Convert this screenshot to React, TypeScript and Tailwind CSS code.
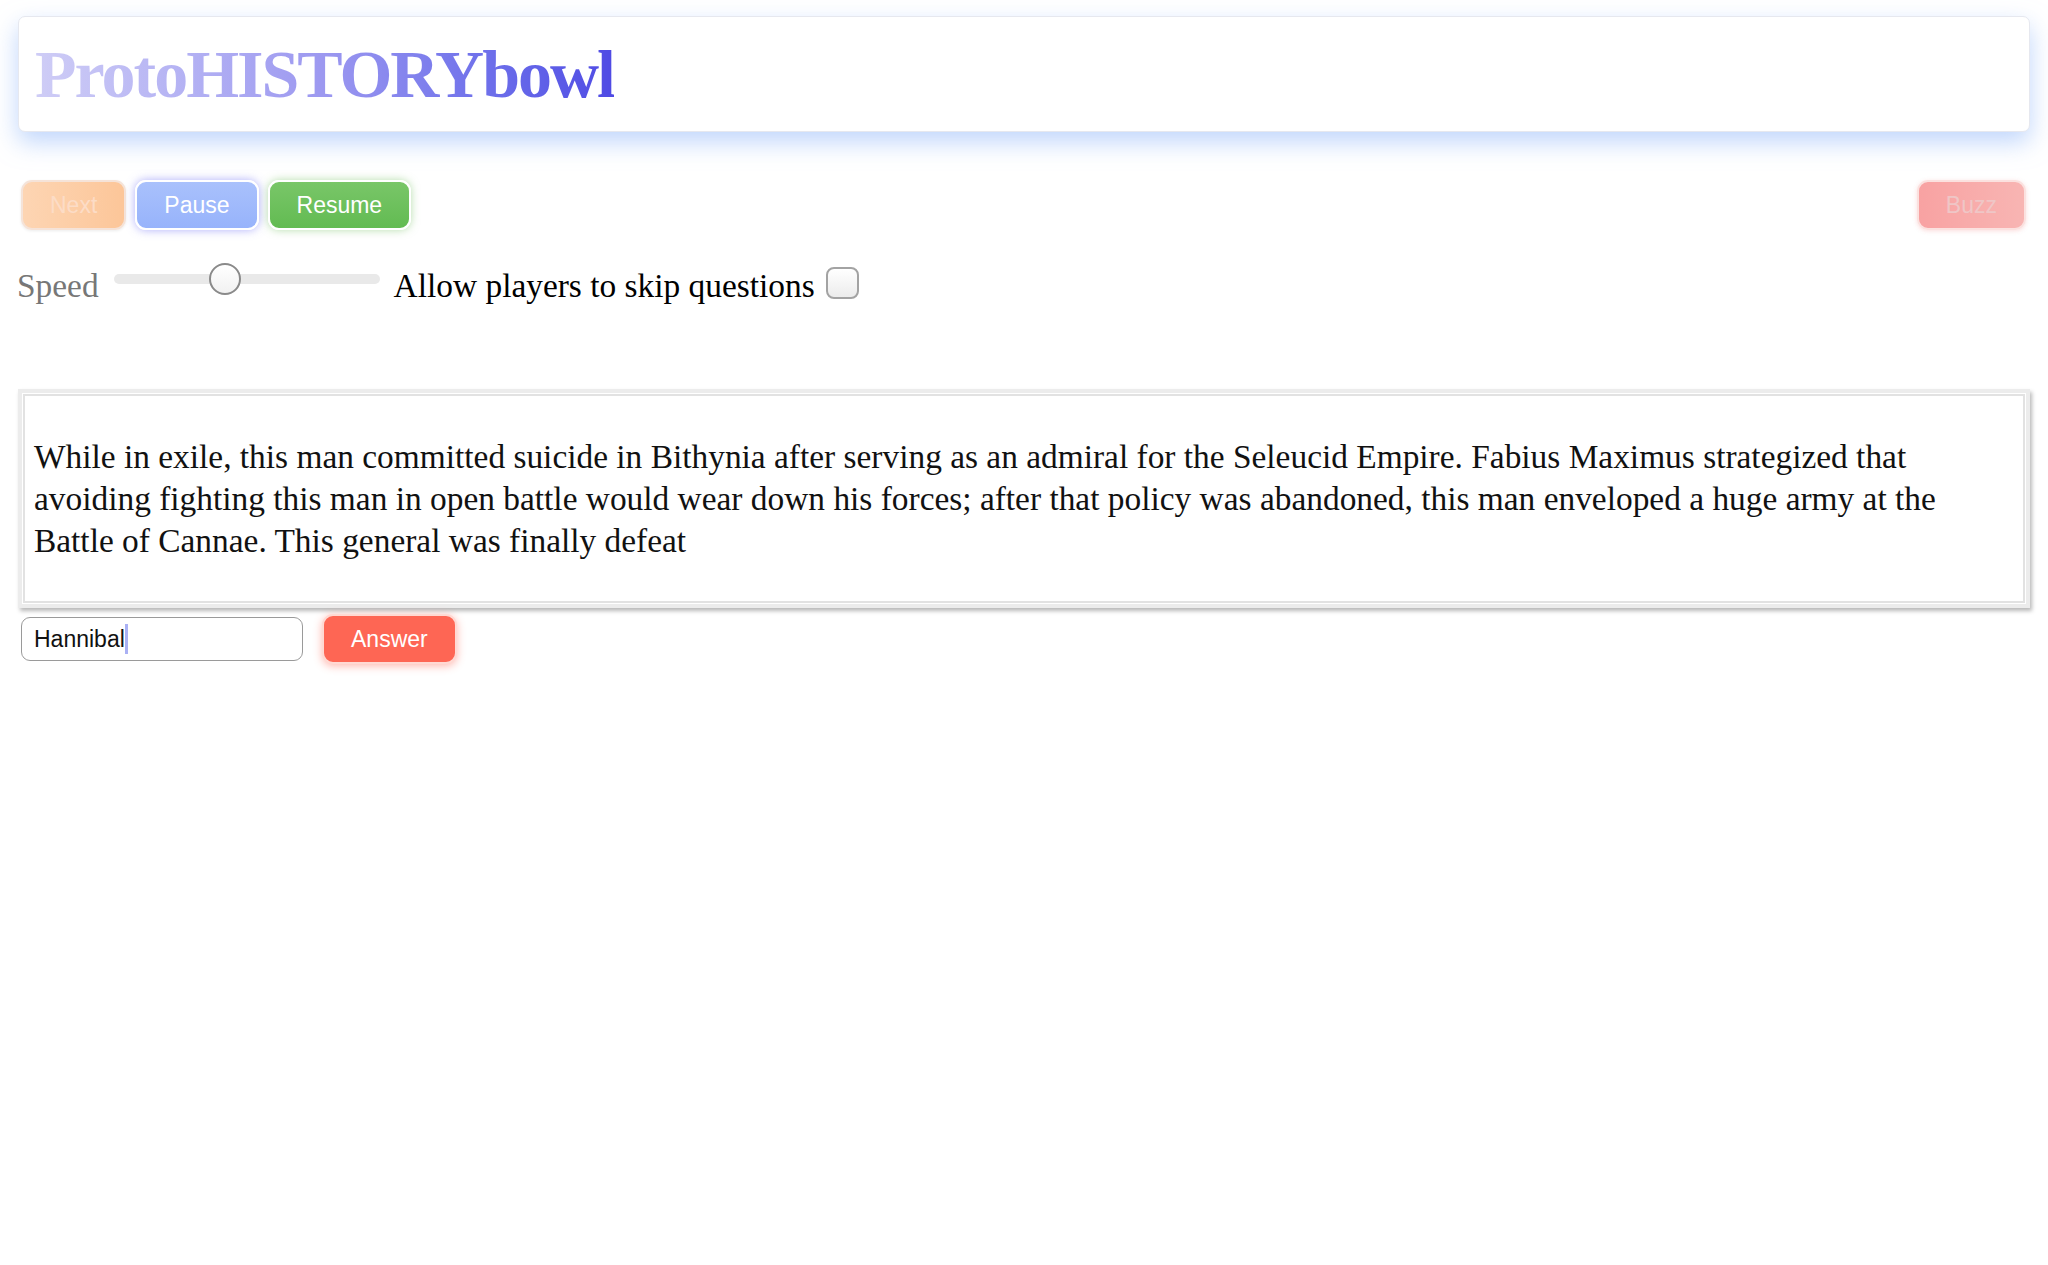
import React from "react";

const serif = "font-['Liberation_Serif','Times_New_Roman',serif]";
const sans = "font-['Liberation_Sans',Arial,sans-serif]";

const Btn = ({ label, className }: { label: string; className: string }) => (
  <button
    className={`h-[50px] px-[27px] rounded-[11px] border-2 text-[23px] leading-none ${sans} ${className}`}
  >
    {label}
  </button>
);

const App = () => {
  return (
    <div className="min-h-screen bg-white px-[18px] pt-[16px]">
      {/* header */}
      <div className="h-[116px] rounded-[7px] border border-[#e6e8ef] bg-white shadow-[0_10px_24px_rgba(140,180,250,0.55)] flex items-center px-[16px]">
        <h1
          className={`${serif} font-bold text-[68px] tracking-[-2px] leading-none bg-gradient-to-r from-[#cfcdf6] via-[#9c98f0] to-[#4f4ae4] bg-clip-text text-transparent pt-[3px] pb-[3px]`}
        >
          ProtoHISTORYbowl
        </h1>
      </div>

      {/* controls */}
      <div className="mt-[48px] flex items-center">
        <div className="flex gap-[9px] pl-[3px]">
          <Btn
            label="Next"
            className="bg-gradient-to-r from-[#fdd5b3] to-[#fcc699] border-[#f5e3d8] text-[#fcdcc6] shadow-[0_1px_3px_rgba(0,0,0,0.08)]"
          />
          <Btn
            label="Pause"
            className="bg-gradient-to-b from-[#a9c1fc] to-[#97b3fb] border-white text-white shadow-[0_0_10px_rgba(110,110,245,0.55)]"
          />
          <Btn
            label="Resume"
            className="bg-gradient-to-b from-[#79c668] to-[#62bb52] border-white text-white shadow-[0_0_9px_rgba(110,190,90,0.5)]"
          />
        </div>
        <div className="ml-auto pr-[4px]">
          <Btn
            label="Buzz"
            className="bg-gradient-to-r from-[#f8a2a2] to-[#f8b5b3] border-[#fbe1df] text-[#efc6c6] shadow-[0_1px_4px_rgba(240,120,120,0.25)]"
          />
        </div>
      </div>

      {/* speed row */}
      <div className={`mt-[36px] flex items-center ${serif} text-[33.4px] leading-[40px]`}>
        <span className="text-[#777] -ml-[1px]">Speed</span>
        <div className="relative ml-[15px] mb-[14px] w-[266px] h-[10px] rounded-full bg-[#e9e9e9]">
          <div className="absolute left-[95px] top-[-11px] w-[32px] h-[32px] rounded-full border-2 border-[#8a8a8a] bg-gradient-to-b from-white to-[#f1f1f1]" />
        </div>
        <span className="ml-[14px] text-black">Allow players to skip questions</span>
        <div className="ml-[11px] mb-[6px] w-[33px] h-[32px] rounded-[8px] border-2 border-[#a3a3a3] bg-gradient-to-b from-white to-[#ececec]" />
      </div>

      {/* question */}
      <div className="mt-[83px] border-[4px] border-[#ececec] p-[1px] shadow-[2px_3px_4px_rgba(0,0,0,0.28)] bg-white">
        <div className="border-2 border-[#e2e2e2] pl-[9px] pr-[40px] pt-[40px] pb-[39px]">
          <p className={`${serif} text-[33.4px] leading-[42px] text-[#111]`}>
            While in exile, this man committed suicide in Bithynia after serving as an admiral for the Seleucid Empire. Fabius Maximus strategized that avoiding fighting this man in open battle would wear down his forces; after that policy was abandoned, this man enveloped a huge army at the Battle of Cannae. This general was finally defeat
          </p>
        </div>
      </div>

      {/* answer row */}
      <div className="mt-[6px] flex items-center pl-[3px]">
        <div className="w-[282px] h-[44px] rounded-[9px] border-[1.5px] border-[#9a9a9a] flex items-center pl-[12px] bg-white">
          <span className={`${sans} text-[23px] text-[#111]`}>Hannibal</span>
          <span className="w-[3px] h-[30px] bg-[#aab1f4]" />
        </div>
        <button
          className={`ml-[19px] h-[50px] px-[27px] rounded-[11px] border-2 border-[#ffd9d3] bg-[#fe6654] text-white text-[23px] leading-none ${sans} shadow-[0_2px_9px_rgba(255,95,75,0.45)]`}
        >
          Answer
        </button>
      </div>
    </div>
  );
};

export default App;
